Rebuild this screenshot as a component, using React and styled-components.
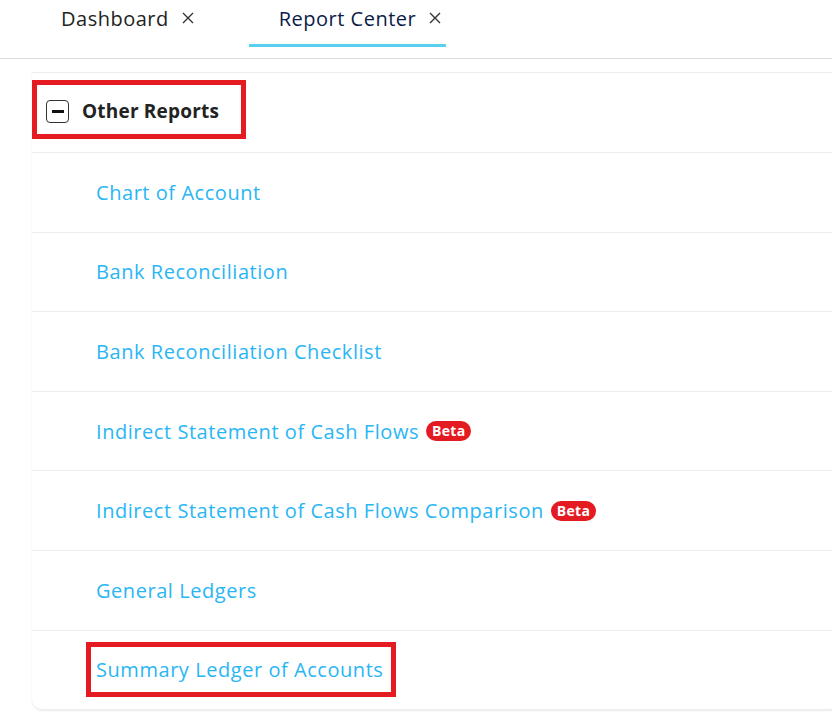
import styled, { createGlobalStyle } from "styled-components"

const COLORS = {
    link: "#29b6f4",
    text: "#222222",
    tabActive: "#0c1b48",
    underline: "#5ad0ef",
    line: "#ececec",
    red: "#e41c22",
}

const reports = [
    { name: "Chart of Account" },
    { name: "Bank Reconciliation" },
    { name: "Bank Reconciliation Checklist" },
    { name: "Indirect Statement of Cash Flows", beta: true },
    { name: "Indirect Statement of Cash Flows Comparison", beta: true },
    { name: "General Ledgers" },
    { name: "Summary Ledger of Accounts", marked: true },
]

function CloseIcon() {
    return (
        <svg width="12" height="12" viewBox="0 0 12 12">
            <path d="M1 1 L11 11 M11 1 L1 11" stroke="#333" strokeWidth="1.4" fill="none" />
        </svg>
    )
}

export default function App() {
    return (
        <>
            <Global />
            <Page>
                <Tabs>
                    <Tab>
                        Dashboard
                        <CloseIcon />
                    </Tab>
                    <Tab ativo>
                        Report Center
                        <CloseIcon />
                    </Tab>
                </Tabs>

                <Content>
                    <Card>
                        <Header>
                            <Marker>
                                <Toggle><Dash /></Toggle>
                                <Title>Other Reports</Title>
                            </Marker>
                        </Header>

                        {reports.map((item, index) => (
                            <Row key={index}>
                                <Link marked={item.marked}>
                                    {item.name}
                                    {item.beta && <Beta>Beta</Beta>}
                                </Link>
                            </Row>
                        ))}
                    </Card>
                </Content>
            </Page>
        </>
    )
}

const Global = createGlobalStyle`
    body {
        margin: 0;
        background: #ffffff;
        font-family: "Open Sans", "Liberation Sans", sans-serif;
    }
`
const Page = styled.div`
    width: 832px;
    height: 723px;
    overflow: hidden;
`
const Tabs = styled.div`
    display: flex;
    height: 59px;
    padding-left: 31px;
    gap: 50px;
    border-bottom: 1px solid #dcdcdc;
    box-sizing: border-box;
`
const Tab = styled.div`
    display: flex;
    align-items: center;
    gap: 13px;
    height: 47px;
    box-sizing: border-box;
    padding: 0 5px 8px 30px;
    font-size: 20px;
    letter-spacing: 0.5px;
    color: ${props => props.ativo ? COLORS.tabActive : COLORS.text};
    border-bottom: 3px solid ${props => props.ativo ? COLORS.underline : "transparent"};
`
const Content = styled.div`
    padding: 13px 0 0 32px;
`
const Card = styled.div`
    border-top: 1px solid ${COLORS.line};
    border-radius: 0 0 0 10px;
    box-shadow: 0 1px 2px rgba(0, 0, 0, 0.08);
    background: #fff;
`
const Header = styled.div`
    height: 80px;
    box-sizing: border-box;
    padding-top: 7px;
    border-bottom: 1px solid ${COLORS.line};
`
const Marker = styled.div`
    display: inline-flex;
    align-items: center;
    gap: 13px;
    width: 214px;
    height: 59px;
    box-sizing: border-box;
    padding: 3px 0 0 9px;
    border: 5px solid ${COLORS.red};
`
const Toggle = styled.div`
    width: 23px;
    height: 23px;
    box-sizing: border-box;
    border: 1.5px solid #333;
    border-radius: 4px;
    display: flex;
    align-items: center;
    justify-content: center;
`
const Dash = styled.div`
    width: 12px;
    height: 3px;
    background: #111;
`
const Title = styled.span`
    font-size: 19px;
    font-weight: 700;
    letter-spacing: 0.2px;
    color: ${COLORS.text};
`
const Row = styled.div`
    height: 79.6px;
    box-sizing: border-box;
    display: flex;
    align-items: center;
    padding-left: 54px;
    border-bottom: 1px solid ${COLORS.line};
    &:last-child {
        border-bottom-left-radius: 10px;
    }
`
const Link = styled.div`
    display: flex;
    align-items: center;
    gap: 7px;
    height: 45px;
    padding: 0 8px 0 5px;
    font-size: 20px;
    letter-spacing: 0.55px;
    color: ${COLORS.link};
    border: 5px solid ${props => props.marked ? COLORS.red : "transparent"};
`
const Beta = styled.span`
    background: ${COLORS.red};
    color: #fff;
    font-size: 14px;
    font-weight: 700;
    letter-spacing: 0.3px;
    height: 20px;
    line-height: 20px;
    padding: 0 6px;
    border-radius: 10px;
`
